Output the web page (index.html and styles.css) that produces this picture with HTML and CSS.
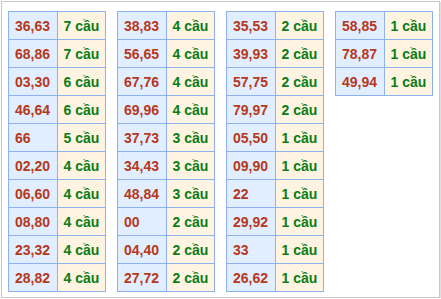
FILE: index.html
```html
<!DOCTYPE html>
<html>
<head>
<meta charset="utf-8">
<link rel="stylesheet" href="styles.css">
</head>
<body>
<div class="box">
  <table class="tk">
    <tr><td class="n">36,63</td><td class="c">7 cầu</td></tr>
    <tr><td class="n">68,86</td><td class="c">7 cầu</td></tr>
    <tr><td class="n">03,30</td><td class="c">6 cầu</td></tr>
    <tr><td class="n">46,64</td><td class="c">6 cầu</td></tr>
    <tr><td class="n">66</td><td class="c">5 cầu</td></tr>
    <tr><td class="n">02,20</td><td class="c">4 cầu</td></tr>
    <tr><td class="n">06,60</td><td class="c">4 cầu</td></tr>
    <tr><td class="n">08,80</td><td class="c">4 cầu</td></tr>
    <tr><td class="n">23,32</td><td class="c">4 cầu</td></tr>
    <tr><td class="n">28,82</td><td class="c">4 cầu</td></tr>
  </table>
  <table class="tk">
    <tr><td class="n">38,83</td><td class="c">4 cầu</td></tr>
    <tr><td class="n">56,65</td><td class="c">4 cầu</td></tr>
    <tr><td class="n">67,76</td><td class="c">4 cầu</td></tr>
    <tr><td class="n">69,96</td><td class="c">4 cầu</td></tr>
    <tr><td class="n">37,73</td><td class="c">3 cầu</td></tr>
    <tr><td class="n">34,43</td><td class="c">3 cầu</td></tr>
    <tr><td class="n">48,84</td><td class="c">3 cầu</td></tr>
    <tr><td class="n">00</td><td class="c">2 cầu</td></tr>
    <tr><td class="n">04,40</td><td class="c">2 cầu</td></tr>
    <tr><td class="n">27,72</td><td class="c">2 cầu</td></tr>
  </table>
  <table class="tk">
    <tr><td class="n">35,53</td><td class="c">2 cầu</td></tr>
    <tr><td class="n">39,93</td><td class="c">2 cầu</td></tr>
    <tr><td class="n">57,75</td><td class="c">2 cầu</td></tr>
    <tr><td class="n">79,97</td><td class="c">2 cầu</td></tr>
    <tr><td class="n">05,50</td><td class="c">1 cầu</td></tr>
    <tr><td class="n">09,90</td><td class="c">1 cầu</td></tr>
    <tr><td class="n">22</td><td class="c">1 cầu</td></tr>
    <tr><td class="n">29,92</td><td class="c">1 cầu</td></tr>
    <tr><td class="n">33</td><td class="c">1 cầu</td></tr>
    <tr><td class="n">26,62</td><td class="c">1 cầu</td></tr>
  </table>
  <table class="tk">
    <tr><td class="n">58,85</td><td class="c">1 cầu</td></tr>
    <tr><td class="n">78,87</td><td class="c">1 cầu</td></tr>
    <tr><td class="n">49,94</td><td class="c">1 cầu</td></tr>
  </table>
</div>
</body>
</html>
```
FILE: styles.css
```css
html, body {
  margin: 0;
  padding: 0;
  background: #ffffff;
}
.box {
  box-sizing: border-box;
  width: 439px;
  height: 297px;
  margin: 1px 0 0 1px;
  border: 1px solid #c8c8c8;
  box-shadow: 1px 1px 1px #e0e0e0;
  padding: 9px 0 0 6px;
  display: flex;
  align-items: flex-start;
  gap: 11px;
}
.tk {
  border-collapse: collapse;
  width: 98px;
  table-layout: fixed;
  font-family: "Liberation Sans", Arial, sans-serif;
  font-size: 14px;
  font-weight: bold;
}
.tk td {
  border: 1px solid #8eb1ef;
  height: 28px;
  padding: 0 0 0 6px;
  box-sizing: border-box;
  text-align: left;
  vertical-align: middle;
  line-height: 16px;
}
.tk .n {
  background: #e1eeff;
  color: #b5381c;
}
.tk .c {
  background: #fff4e2;
  color: #0a7d16;
}
```
